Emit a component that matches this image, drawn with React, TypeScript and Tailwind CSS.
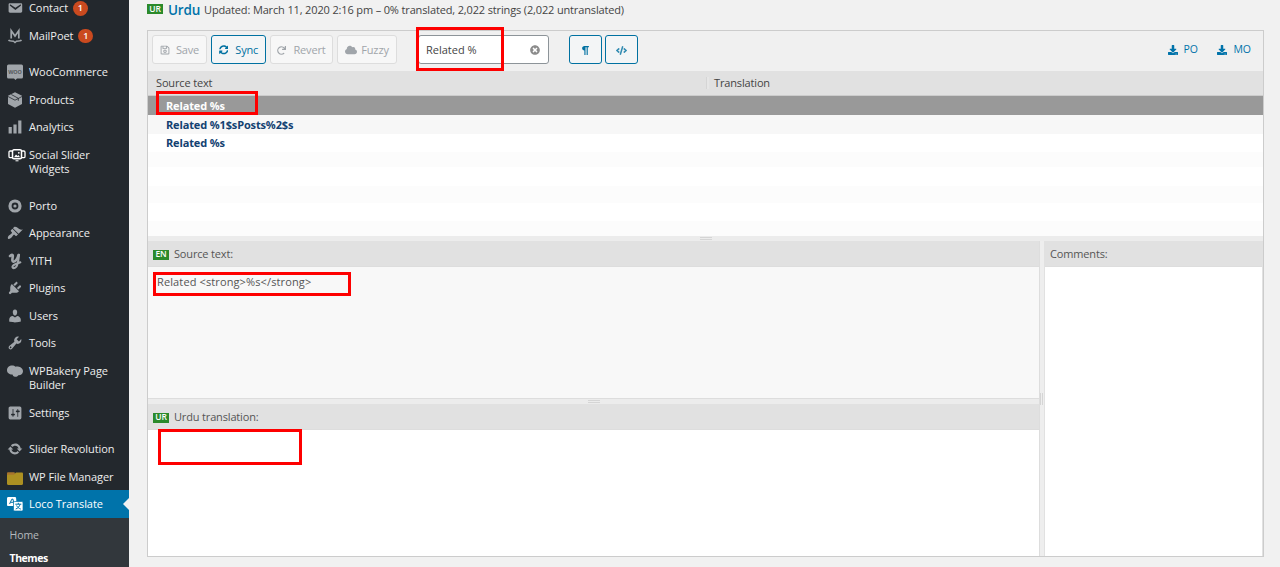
import { useState, type ReactNode } from "react";
import clsx from "clsx";
import {
  FaCloud,
  FaCode,
  FaDownload,
  FaRedo,
  FaRegSave,
  FaSyncAlt,
  FaTimesCircle,
} from "react-icons/fa";
import { ImPilcrow } from "react-icons/im";

type MenuItem = {
  label: string;
  icon: ReactNode;
  badge?: number;
  tall?: boolean;
  gap?: boolean;
  active?: boolean;
};

const Dash = ({ d }: { d: string }) => (
  <svg viewBox="0 0 20 20" className="size-4" fill="currentColor">
    <path d={d} />
  </svg>
);

const MailPoetIcon = () => (
  <svg viewBox="0 0 16 16" className="size-4" fill="none" stroke="currentColor">
    <path d="M4.200 10.500V2.700L8 8l3.800-5.300v7.800" strokeWidth="1.700" />
    <path d="M1.500 12c1 1.200 3.500 1.200 5 1.200L8 14.500l1.500-1.300c1.500 0 4 0 5-1.200" strokeWidth="1.400" />
  </svg>
);

const WooIcon = () => (
  <svg viewBox="0 0 16 16" className="size-4" fill="currentColor">
    <path d="M1.500 .5h13a1.500 1.500 0 0 1 1.500 1.500v11a1.500 1.500 0 0 1-1.500 1.500H10L8.500 16 7 14.500H1.500A1.500 1.500 0 0 1 0 13V2A1.500 1.500 0 0 1 1.500 .5z" />
    <text x="8" y="9.500" textAnchor="middle" fontSize="5.400" fontWeight="700" fill="#555a5e" fontFamily="Open Sans, sans-serif">
      WOO
    </text>
  </svg>
);

const ProductsIcon = () => (
  <svg viewBox="0 0 16 16" className="size-4">
    <path d="M8 .2l7 3.500v8.300l-7 3.800-7-3.800V3.700z" fill="currentColor" />
    <path d="M1 4.500l7 3.700 7-3.700M4.300 2.500l7 3.800v2.500" fill="none" stroke="#23282d" strokeWidth=".8" />
  </svg>
);

const SliderIcon = () => (
  <svg viewBox="0 0 18 16" className="ml-1 h-4 w-[18px] text-white" fill="none" stroke="currentColor">
    <rect x="4.500" y="2.800" width="9" height="9" rx="1.500" strokeWidth="1.500" />
    <path d="M4 4H2.200C1.300 4 1 4.500 1 5.200v4.300c0 .8.500 1.200 1.200 1.200H4M14 4h1.800c.9 0 1.200.5 1.200 1.200v4.300c0 .8-.5 1.200-1.200 1.200H14" strokeWidth="1.300" />
    <path d="M6 10.300l2-2.800 1.500 1.500 1-1 1.500 2.300z" fill="currentColor" stroke="none" />
    <circle cx="10.800" cy="5.800" r=".9" fill="currentColor" stroke="none" />
    <path d="M7.500 13.800h3" strokeWidth="1" />
  </svg>
);

const PortoIcon = () => (
  <svg viewBox="0 0 16 16" className="size-4">
    <circle cx="8" cy="8" r="5" fill="none" stroke="currentColor" strokeWidth="3.200" />
    <circle cx="8" cy="8" r="1.600" fill="currentColor" />
  </svg>
);

const YithIcon = () => (
  <svg viewBox="0 0 16 18" className="h-[18px] w-4" fill="none" stroke="currentColor" strokeLinecap="round">
    <path d="M3 4c1.500-1.700 3-1.500 2.800.3C5.600 6.500 4.600 9.500 6.500 9.700c2 .1 4.200-3 5-6.700" strokeWidth="2.600" />
    <path d="M12 2.800c-.5 4.300-.8 9-2.500 11.700-1.500 2.300-4.200 2-4 .2.200-2 4-2.800 7.800-4.400" strokeWidth="2.100" />
  </svg>
);

const BakeryIcon = () => (
  <svg viewBox="0 0 16 16" className="size-4" fill="currentColor">
    <path d="M5 2.500c1.600 0 2.700.5 3.500 1.300C9.500 2.900 15.800 3.500 16 8c.1 3-2.300 4.500-4.700 4.300-.8 1.100-2 1.700-3.300 1.500-1.500-.2-2.200-1.300-2.500-2.300C2.500 11.700 0 9.800 0 7.200 0 4.500 2.300 2.500 5 2.500z" />
  </svg>
);

const FolderIcon = () => (
  <svg viewBox="0 0 16 14" className="mt-0.5 h-3.5 w-4">
    <path d="M0 2.500C0 1.700.5 1.200 1.200 1.200h5.500c.8 0 1.200.5 1.200 1.300V7H0z" fill="#a8742c" />
    <path d="M0 5c0-.8.5-1.200 1.200-1.200h5.600L9 1.500h5.800c.7 0 1.200.5 1.200 1.200v10.100c0 .7-.5 1.200-1.200 1.200H1.200C.5 14 0 13.500 0 12.800z" fill="#ac9022" />
  </svg>
);

const LocoIcon = () => (
  <svg viewBox="0 0 16 14" className="h-3.5 w-4 text-white">
    <path d="M1.500 0h6.300c.8 0 1.200.4 1.300 1.200L9.800 9H1.200C.4 9 0 8.500 0 7.700V1.500C0 .5.500 0 1.500 0z" fill="currentColor" />
    <path d="M2.600 7l2.200-4.800h1.200L7 7M3.500 5.300h3" fill="none" stroke="#0073aa" strokeWidth="1" />
    <rect x="6.500" y="4.500" width="9.500" height="9.500" rx="1.200" fill="currentColor" stroke="#0073aa" strokeWidth=".7" />
    <path d="M8.300 7.200h6M11.300 5.800v1.400M13 7.300c-.4 2-2 4-4.300 4.700M9.600 8.500c.8 1.700 2.300 3 4.200 3.600" fill="none" stroke="#0073aa" strokeWidth="1" />
  </svg>
);

const menu: MenuItem[] = [
  {
    label: "Contact",
    badge: 1,
    icon: <Dash d="M3.870 4h13.250C18.370 4 19 4.590 19 5.790v8.420c0 1.190-.63 1.790-1.880 1.790H3.870c-1.250 0-1.880-.6-1.880-1.790V5.790c0-1.200.63-1.790 1.880-1.790zm6.620 8.600l6.740-5.530c.24-.2.430-.66.130-1.070-.29-.41-.82-.42-1.170-.17l-5.700 3.860L4.800 5.830c-.35-.25-.88-.24-1.170.17-.3.410-.11.870.130 1.070z" />,
  },
  { label: "MailPoet", badge: 1, icon: <MailPoetIcon /> },
  { label: "WooCommerce", gap: true, icon: <WooIcon /> },
  { label: "Products", icon: <ProductsIcon /> },
  { label: "Analytics", icon: <Dash d="M18 18V2h-4v16h4zm-6 0V7H8v11h4zm-6 0v-8H2v8h4z" /> },
  { label: "Social Slider Widgets", tall: true, icon: <SliderIcon /> },
  { label: "Porto", gap: true, icon: <PortoIcon /> },
  {
    label: "Appearance",
    icon: <Dash d="M14.480 11.060L7.410 3.990l1.500-1.500c.5-.56 2.300-.47 3.510.32 1.210.8 1.430 1.280 2.910 2.100 1.180.64 2.450 1.260 4.450.85zm-.71.710L6.700 4.700 4.930 6.470c-.39.390-.39 1.020 0 1.410l1.060 1.060c.39.390.39 1.030 0 1.420-.6.600-1.430 1.110-2.210 1.690-.35.260-.7.530-1.010.84C1.430 14.230.4 16.080 1.400 17.070c.99 1 2.840-.03 4.180-1.360.31-.31.580-.66.850-1.020.57-.78 1.080-1.610 1.690-2.210.39-.39 1.020-.39 1.410 0l1.060 1.060c.39.390 1.020.39 1.410 0z" />,
  },
  { label: "YITH", icon: <YithIcon /> },
  {
    label: "Plugins",
    icon: <Dash d="M13.110 4.360L9.870 7.600 8 5.730l3.240-3.240c.35-.34 1.050-.2 1.560.32.520.51.660 1.210.31 1.550zm-8 1.770l.910-1.120 9.010 9.010-1.190.84c-.71.710-2.630 1.160-3.820 1.160H6.140L4.900 17.260c-.59.590-1.540.59-2.120 0-.59-.58-.59-1.530 0-2.120l1.240-1.240v-3.880c0-1.130.4-3.190 1.090-3.890zm7.260 3.970l3.240-3.240c.34-.35 1.040-.21 1.550.31.520.51.660 1.210.31 1.550l-3.240 3.250z" />,
  },
  {
    label: "Users",
    icon: <Dash d="M10 9.250c-2.270 0-2.730-3.440-2.730-3.440C7 4.020 7.820 2 9.970 2c2.160 0 2.980 2.020 2.710 3.810 0 0-.41 3.440-2.680 3.440zm0 2.570L12.720 10c2.390 0 4.520 2.330 4.520 4.530v2.490s-3.650 1.130-7.240 1.130c-3.650 0-7.240-1.130-7.240-1.130v-2.490c0-2.250 1.940-4.480 4.470-4.480z" />,
  },
  {
    label: "Tools",
    icon: <Dash d="M16.680 9.770c-1.340 1.340-3.300 1.670-4.950.99l-5.410 6.520c-.99.990-2.590.99-3.580 0s-.99-2.590 0-3.570l6.520-5.420c-.68-1.650-.35-3.610.99-4.950 1.280-1.280 3.120-1.620 4.720-1.060l-2.890 2.890 2.820 2.820 2.860-2.870c.53 1.580.18 3.390-1.080 4.650zM3.810 16.210c.4.390 1.040.39 1.430 0 .4-.4.4-1.040 0-1.430-.39-.4-1.030-.4-1.430 0-.39.390-.39 1.030 0 1.430z" />,
  },
  { label: "WPBakery Page Builder", tall: true, icon: <BakeryIcon /> },
  {
    label: "Settings",
    icon: <Dash d="M18 16V4c0-1.100-.9-2-2-2H4c-1.100 0-2 .9-2 2v12c0 1.100.9 2 2 2h12c1.100 0 2-.9 2-2zM8 11h1c.55 0 1 .45 1 1s-.45 1-1 1H8v1.500c0 .28-.22.500-.5.500s-.5-.22-.5-.5V13H6c-.55 0-1-.45-1-1s.45-1 1-1h1V5.500c0-.28.220-.5.500-.5s.5.220.5.500V11zm5-2h-1c-.55 0-1-.45-1-1s.45-1 1-1h1V5.500c0-.28.220-.5.500-.5s.5.220.5.500V7h1c.55 0 1 .45 1 1s-.45 1-1 1h-1v5.500c0 .28-.22.500-.5.500s-.5-.22-.5-.5V9z" />,
  },
  {
    label: "Slider Revolution",
    gap: true,
    icon: <Dash d="M10.200 3.280c3.530 0 6.430 2.610 6.920 6h2.080l-3.500 4-3.500-4h2.320c-.45-1.970-2.210-3.450-4.320-3.450-1.450 0-2.730.71-3.540 1.780L4.950 5.660C6.230 4.200 8.110 3.280 10.200 3.280zm-.4 13.440c-3.520 0-6.430-2.610-6.920-6H.8l3.500-4c1.170 1.330 2.330 2.670 3.500 4H5.480c.45 1.970 2.210 3.450 4.320 3.450 1.450 0 2.730-.71 3.540-1.780l1.710 1.950c-1.280 1.460-3.150 2.380-5.250 2.380z" />,
  },
  { label: "WP File Manager", icon: <FolderIcon /> },
  { label: "Loco Translate", active: true, icon: <LocoIcon /> },
];

const Sidebar = () => (
  <nav className="h-full w-[129px] shrink-0 overflow-hidden bg-[#23282d] text-[11px] leading-[14.5px] tracking-[-0.06px] text-[#eee]">
    <ul className="-mt-[5.75px]">
      {menu.map((item) => (
        <li
          key={item.label}
          className={clsx(
            "relative flex items-start",
            item.tall ? "h-[42px]" : "h-[27.5px]",
            item.gap && "mt-[9px]",
            item.active && "bg-[#0073aa] text-white"
          )}
        >
          <span
            className={clsx(
              "flex h-[28px] w-[29px] shrink-0 items-center justify-center",
              item.active ? "text-white" : "text-[#a0a5aa]"
            )}
          >
            {item.icon}
          </span>
          <span className={clsx("pt-[7px]", item.tall ? "w-[84px]" : "whitespace-nowrap")}>
            {item.label}
          </span>
          {item.badge && (
            <span className="mt-[7px] ml-[5px] flex size-[14.5px] items-center justify-center rounded-full bg-[#ca4a1f] text-[9px] font-semibold text-white">
              {item.badge}
            </span>
          )}
          {item.active && (
            <span className="absolute top-1/2 right-0 -translate-y-1/2 border-y-[6.5px] border-r-[6.5px] border-y-transparent border-r-[#f1f1f1]" />
          )}
        </li>
      ))}
    </ul>
    <ul className="h-[60px] bg-[#32373c] pt-[6px] pl-[9.500px]">
      <li className="h-[22.5px] pt-[4.500px] text-[10.500px] text-[#b4b9be]">Home</li>
      <li className="h-[23px] pt-[4.500px] text-[10.500px] font-bold tracking-[-0.45px] text-white">Themes</li>
    </ul>
  </nav>
);

const Lang = ({ code }: { code: string }) => (
  <span className="flex h-[10px] w-4 shrink-0 items-center justify-center bg-[#2b8a2b] text-[8.500px] leading-none font-semibold text-white">
    {code}
  </span>
);

type ButtonProps = { children: ReactNode; className?: string; disabled?: boolean };

const ToolButton = ({ children, className, disabled }: ButtonProps) => (
  <button
    disabled={disabled}
    className={clsx(
      "flex h-[29px] items-center justify-center rounded-[3px] border pt-px text-[11px] tracking-[-0.15px]",
      disabled ? "border-[#ddd] bg-[#f7f7f7] text-[#a0a5aa]" : "border-[#0071a1] bg-[#f3f5f6] text-[#0071a1]",
      className
    )}
  >
    {children}
  </button>
);

const PaneHeader = ({ children }: { children: ReactNode }) => (
  <div className="flex h-[26px] shrink-0 items-center gap-[5px] border-b border-[#ddd] bg-[#e1e1e1] pt-[2px] pl-[5px] text-[11px] tracking-[-0.16px] text-[#555]">
    {children}
  </div>
);

const Toolbar = () => {
  const [filter, setFilter] = useState("Related %");

  return (
    <div className="flex h-10 shrink-0 items-start pt-1 pl-1">
      <ToolButton disabled className="w-[55px] gap-[6px]">
        <FaRegSave className="size-[10px]" />
        Save
      </ToolButton>
      <ToolButton className="ml-1 w-[55px] gap-[7px]">
        <FaSyncAlt className="size-[9.500px]" />
        Sync
      </ToolButton>
      <ToolButton disabled className="ml-1 w-[63px] gap-[7px]">
        <FaRedo className="size-[9px]" />
        Revert
      </ToolButton>
      <ToolButton disabled className="ml-1 w-[60px] gap-1">
        <FaCloud className="size-[12px]" />
        Fuzzy
      </ToolButton>
      <div className="ml-[21px] flex h-[29px] w-[131px] items-center rounded-[3px] border border-[#8d9499] bg-white pr-2 pl-[7px]">
        <input
          value={filter}
          onChange={(e) => setFilter(e.target.value)}
          className="w-0 grow pt-px text-[11px] text-[#444] outline-none"
        />
        <FaTimesCircle className="size-[10px] text-[#8c8c8c]" />
      </div>
      <ToolButton className="ml-5 w-[33px]">
        <ImPilcrow className="size-[9px]" />
      </ToolButton>
      <ToolButton className="ml-[3px] w-[33px]">
        <FaCode className="size-[11px] opacity-80" />
      </ToolButton>
      <div className="mr-[12px] ml-auto flex h-[29px] items-center gap-[19.5px] pt-px text-[10.500px] text-[#0073aa]">
        <a className="flex items-center gap-[5px]">
          <FaDownload className="mb-px size-[10px]" />
          PO
        </a>
        <a className="flex items-center gap-[6px]">
          <FaDownload className="mb-px size-[10px]" />
          MO
        </a>
      </div>
    </div>
  );
};

// the filtered list is padded with empty striped rows
const rows = [
  { text: "Related %s", className: "h-[19px] bg-[#999] text-white" },
  { text: "Related %1$sPosts%2$s", className: "h-[18.5px] bg-[#f7f7f7]" },
  { text: "Related %s", className: "h-[18.5px]" },
  { text: "", className: "h-[15px] bg-[#fcfcfc]" },
  { text: "", className: "h-[19px]" },
  { text: "", className: "h-[17px] bg-[#fcfcfc]" },
  { text: "", className: "h-[18px]" },
  { text: "", className: "h-[15px] bg-[#fcfcfc]" },
];

const StringList = () => (
  <div className="flex h-[165px] shrink-0 flex-col overflow-hidden bg-white">
    <div className="flex h-[25px] shrink-0 items-center border-b border-[#ccc] bg-[#e1e1e1] text-[11px] tracking-[-0.15px] text-[#444]">
      <span className="w-[558px] pl-2">Source text</span>
      <span className="flex h-3 w-[3px] border-l border-[#d5d5d5] bg-[#e6e6e6]" />
      <span className="h-3.5 pl-[5px] leading-[14px]">Translation</span>
    </div>
    {rows.map((row, i) => (
      <div
        key={i}
        className={clsx(
          "flex shrink-0 items-center pt-[1.500px] pl-[18px] text-[11px] font-bold tracking-[-0.14px]",
          i > 0 && "text-[#124171]",
          row.className
        )}
      >
        {row.text}
      </div>
    ))}
  </div>
);

const Editor = () => (
  <section className="flex h-[527px] w-[1117px] flex-col border border-[#ccc] bg-[#f0f0f0]">
    <Toolbar />
    <StringList />
    <div className="flex h-[5px] shrink-0 items-center justify-center bg-[#ececec]">
      <span className="h-[3px] w-3 border-y border-[#d5d5d5]" />
    </div>
    <div className="flex min-h-0 grow">
      <div className="flex w-[892px] flex-col border-r border-[#ddd]">
        <PaneHeader>
          <Lang code="EN" />
          Source text:
        </PaneHeader>
        <div className="h-[132px] shrink-0 border-b border-[#ddd] bg-[#f8f8f8] pt-[7px] pl-[9px] text-[11px] leading-[16px] tracking-[0.12px] text-[#555]">
          {"Related <strong>%s</strong>"}
        </div>
        <div className="flex h-[5px] shrink-0 items-center justify-center bg-[#ececec]">
          <span className="h-[3px] w-3 border-y border-[#d5d5d5]" />
        </div>
        <PaneHeader>
          <Lang code="UR" />
          Urdu translation:
        </PaneHeader>
        <div className="grow bg-white" />
      </div>
      <div className="flex w-1 items-center bg-[#eee]">
        <span className="h-3 w-[3px] border-x border-[#d5d5d5]" />
      </div>
      <div className="flex grow flex-col border-x border-[#e1e1e1] bg-white">
        <PaneHeader>Comments:</PaneHeader>
      </div>
    </div>
  </section>
);

export default function App() {
  return (
    <div className="relative flex h-[567px] w-[1280px] overflow-hidden bg-[#f1f1f1] font-['Open_Sans','Noto_Sans',sans-serif]">
      <Sidebar />
      <main className="flex flex-col pl-[18px]">
        <header className="flex h-[30px] items-start pt-px">
          <span className="pt-[3px]">
            <Lang code="UR" />
          </span>
          <h1 className="ml-[5px] text-[13.500px] leading-[18px] font-semibold tracking-[-0.2px] text-[#0073aa]">Urdu</h1>
          <p className="ml-1 text-[11px] leading-[17px] tracking-[-0.145px] whitespace-nowrap text-[#444]">
            Updated: March 11, 2020 2:16 pm – 0% translated, 2,022 strings (2,022 untranslated)
          </p>
        </header>
        <Editor />
      </main>

      {/* highlight boxes */}
      <div className="pointer-events-none absolute top-[27px] left-[416px] h-[44px] w-[88px] border-[3px] border-[#fe0000]" />
      <div className="pointer-events-none absolute top-[91px] left-[156px] h-[24px] w-[102px] border-[3px] border-[#fe0000]" />
      <div className="pointer-events-none absolute top-[272px] left-[153px] h-[24px] w-[198px] border-[3px] border-[#fe0000]" />
      <div className="pointer-events-none absolute top-[429px] left-[158px] h-[36px] w-[144px] border-[3px] border-[#fe0000]" />
    </div>
  );
}
